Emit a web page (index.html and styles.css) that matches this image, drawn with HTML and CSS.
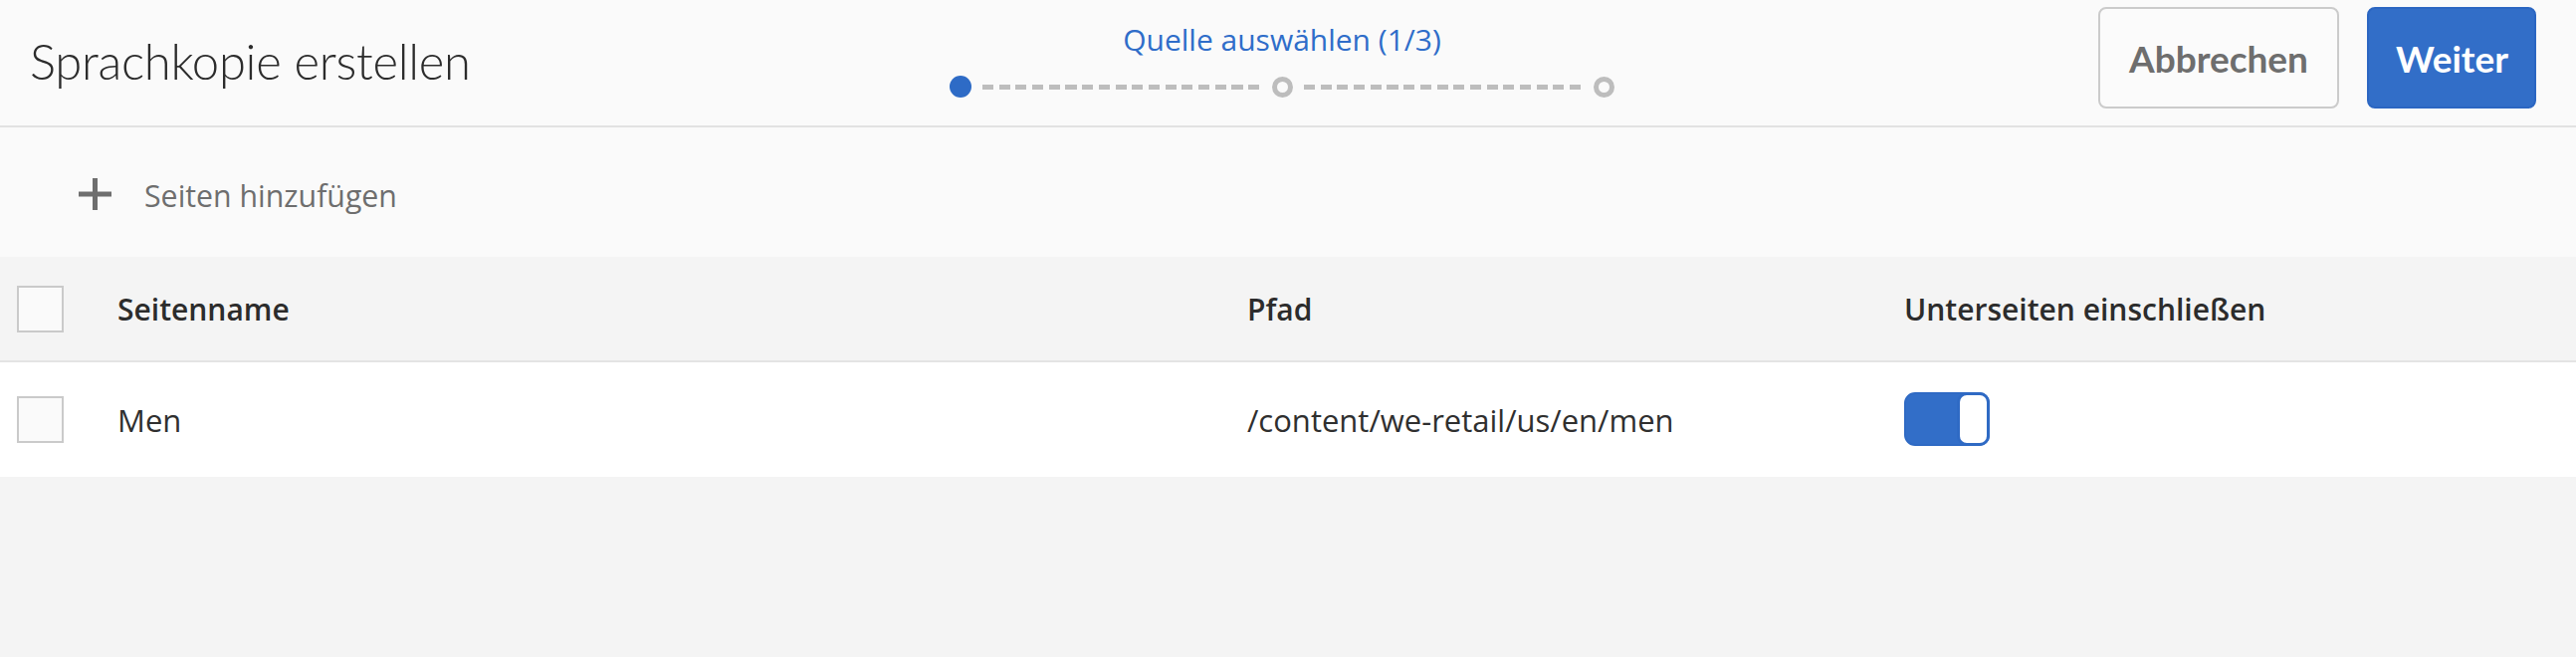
FILE: index.html
```html
<!DOCTYPE html>
<html lang="de">
<head>
<meta charset="utf-8">
<title>Sprachkopie erstellen</title>
<link rel="stylesheet" href="styles.css">
</head>
<body>
<div class="page">
  <header class="header">
    <h1 class="title">Sprachkopie erstellen</h1>
    <div class="stepper">
      <div class="step-label">Quelle auswählen (1/3)</div>
      <div class="track">
        <span class="dot dot-active"></span>
        <span class="dash"></span>
        <span class="dot dot-ring"></span>
        <span class="dash"></span>
        <span class="dot dot-ring"></span>
      </div>
    </div>
    <div class="actions">
      <button class="btn btn-secondary">Abbrechen</button>
      <button class="btn btn-primary">Weiter</button>
    </div>
  </header>

  <div class="toolbar">
    <span class="plus" aria-hidden="true">
      <svg width="33" height="32" viewBox="0 0 33 32"><rect x="0" y="13.5" width="33" height="5" fill="#6e6e6e"/><rect x="14" y="0" width="5" height="32" fill="#6e6e6e"/></svg>
    </span>
    <span class="toolbar-label">Seiten hinzufügen</span>
  </div>

  <div class="table">
    <div class="row row-head">
      <div class="cell cell-check"><span class="checkbox"></span></div>
      <div class="cell">Seitenname</div>
      <div class="cell">Pfad</div>
      <div class="cell">Unterseiten einschließen</div>
    </div>
    <div class="row row-body">
      <div class="cell cell-check"><span class="checkbox"></span></div>
      <div class="cell">Men</div>
      <div class="cell">/content/we-retail/us/en/men</div>
      <div class="cell"><span class="toggle"><span class="knob"></span></span></div>
    </div>
  </div>
</div>
</body>
</html>
```

FILE: styles.css
```css
* { box-sizing: border-box; }

html, body {
  margin: 0;
  padding: 0;
}

body {
  background: #f4f4f4;
  font-family: "Open Sans", "Liberation Sans", sans-serif;
  color: #2c2c2c;
}

.page {
  width: 2588px;
  height: 660px;
  display: flex;
  flex-direction: column;
}

.header {
  height: 128px;
  background: #fafafa;
  border-bottom: 2px solid #e2e2e2;
  display: grid;
  grid-template-columns: 1fr auto 1fr;
  align-items: start;
}

.title {
  margin: 0;
  padding: 31px 0 0 30px;
  font-family: "Lato", "Open Sans", sans-serif;
  font-weight: 300;
  font-size: 49px;
  line-height: 60px;
  color: #2c2c2c;
  letter-spacing: -0.3px;
}

.stepper {
  display: flex;
  flex-direction: column;
  align-items: center;
  padding-top: 22px;
  margin-left: -12px;
}

.step-label {
  font-size: 30px;
  line-height: 36px;
  color: #2f6dc9;
}

.track {
  margin-top: 18px;
  display: flex;
  align-items: center;
  height: 22px;
}

.dot {
  display: block;
  width: 22px;
  height: 22px;
  border-radius: 50%;
}

.dot-active {
  background: #2e6bc6;
}

.dot-ring {
  width: 21px;
  height: 21px;
  border: 5px solid #bdbdbd;
  background: #fafafa;
}

.dash {
  display: block;
  width: 280px;
  height: 5px;
  margin: 0 11px;
  background: repeating-linear-gradient(to right, #bdbdbd 0 11px, transparent 11px 16.7px);
}

.actions {
  justify-self: end;
  display: flex;
  gap: 28px;
  padding: 7px 40px 0 0;
}

.btn {
  height: 102px;
  padding: 0 27px;
  border-radius: 8px;
  font-family: "Lato", "Open Sans", sans-serif;
  font-weight: 700;
  font-size: 37px;
  cursor: pointer;
}

.btn-secondary {
  width: 242px;
  background: #fbfbfb;
  border: 2px solid #cbcbcb;
  color: #6e6e6e;
}

.btn-primary {
  width: 170px;
  background: #326ec8;
  border: 2px solid #2b66c2;
  color: #ffffff;
}

.toolbar {
  height: 130px;
  background: #fafafa;
  display: flex;
  align-items: center;
  padding: 6px 0 0 79px;
  gap: 33px;
}

.plus {
  display: flex;
  width: 33px;
  height: 32px;
  margin-top: -2px;
}

.toolbar-label {
  font-size: 30.3px;
  color: #6e6e6e;
}

.row {
  display: grid;
  grid-template-columns: 118px 1135px 660px 1fr;
  align-items: center;
  font-size: 30px;
}

.row-head {
  height: 106px;
  background: #f4f4f4;
  border-bottom: 2px solid #e4e4e4;
  font-weight: 600;
  color: #2c2c2c;
}

.row-body {
  height: 115px;
  background: #ffffff;
  color: #2f2f2f;
  font-size: 31px;
}

.cell-check {
  padding-left: 17px;
  display: flex;
  align-items: center;
}

.checkbox {
  display: block;
  width: 47px;
  height: 47px;
  border: 2px solid #cacaca;
  background: #fafafa;
}

.toggle {
  display: flex;
  justify-content: flex-end;
  width: 86px;
  height: 54px;
  border-radius: 11px;
  background: #326ec8;
  border: 2px solid #2f6ac4;
  margin-top: -2px;
}

.knob {
  display: block;
  width: 33px;
  height: 54px;
  border-radius: 10px;
  background: #ffffff;
  border: 3px solid #2f6ac4;
  margin: -2px -2px -2px 0;
}
```
